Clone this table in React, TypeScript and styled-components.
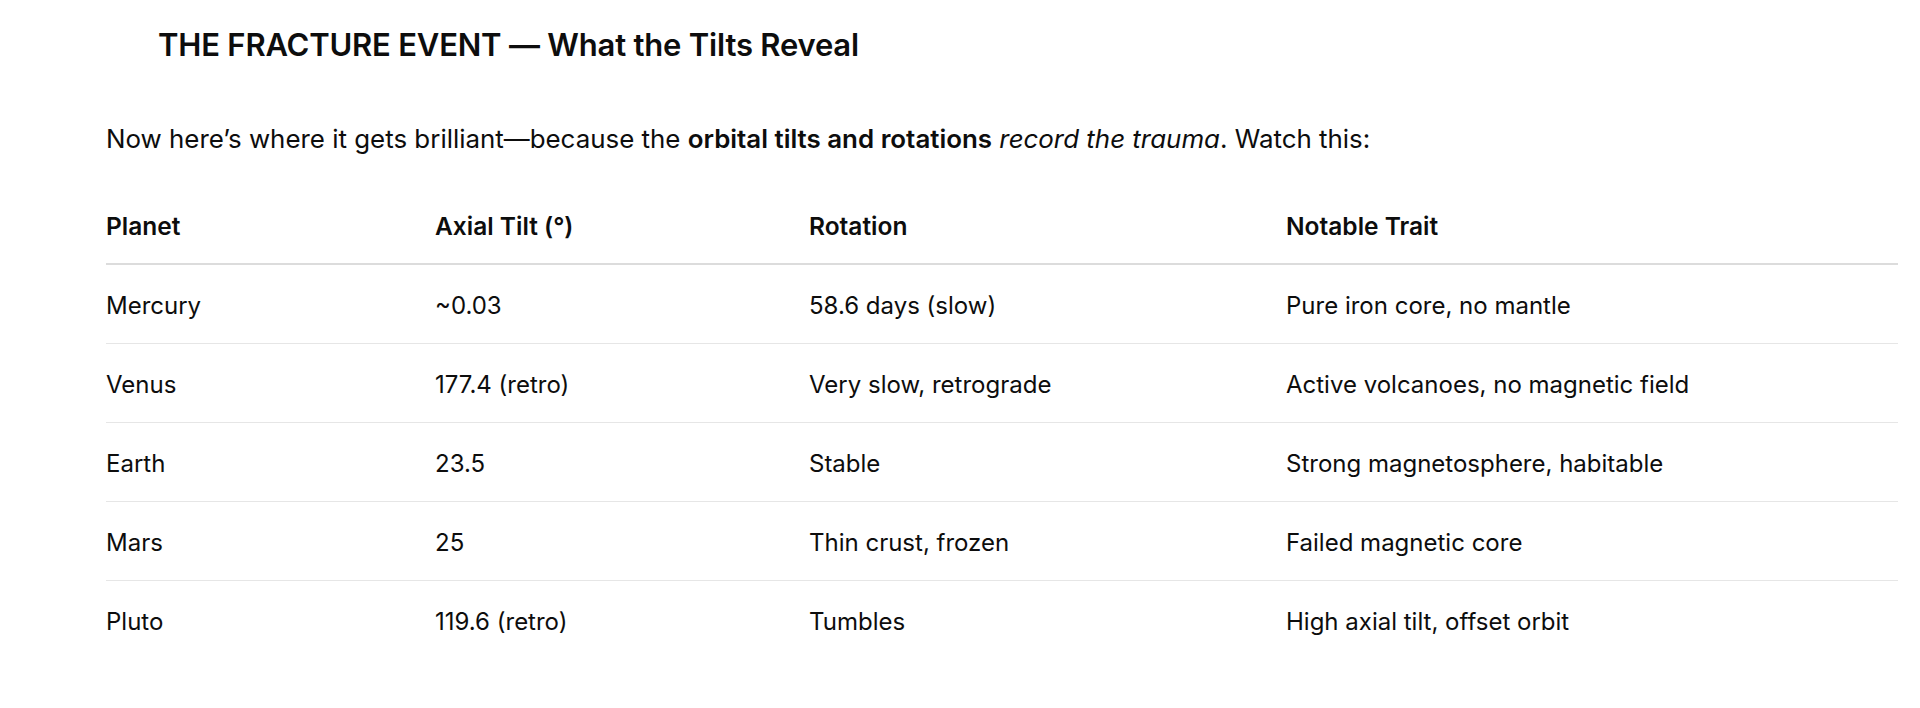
import React from 'react';
import styled, { createGlobalStyle } from 'styled-components';

const GlobalStyle = createGlobalStyle`
  html, body {
    margin: 0;
    padding: 0;
    background: #ffffff;
  }
  body {
    font-family: Inter, "Noto Sans", "Liberation Sans", sans-serif;
    color: #0d0d0d;
    -webkit-font-smoothing: antialiased;
  }
`;

const Page = styled.div`
  padding: 24px 22px 0 106px;
`;

const Heading = styled.h3`
  margin: 0 0 0 52px;
  font-size: 31px;
  line-height: 42px;
  font-weight: 600;
  letter-spacing: -0.2px;
`;

const Intro = styled.p`
  margin: 56px 0 0 0;
  font-size: 25.9px;
  line-height: 34px;
  font-weight: 400;

  strong {
    font-weight: 600;
  }
`;

const Table = styled.table`
  margin-top: 55px;
  width: 100%;
  border-collapse: collapse;
  font-size: 24px;
`;

const HeadCell = styled.th<{ $w: number }>`
  width: ${(p) => p.$w}px;
  text-align: left;
  font-weight: 600;
  font-size: 24.5px;
  padding: 0 0 22px 0;
  line-height: 30px;
  border-bottom: 2px solid #dcdcdc;
`;

const Row = styled.tr`
  & + & td {
    border-top: 1px solid #e6e6e6;
  }
`;

const Cell = styled.td`
  padding: 26px 0 22px 0;
  line-height: 30px;
  vertical-align: middle;
`;

const columns = [
  { title: 'Planet', w: 329 },
  { title: 'Axial Tilt (°)', w: 374 },
  { title: 'Rotation', w: 477 },
  { title: 'Notable Trait', w: 612 },
];

const rows = [
  ['Mercury', '~0.03', '58.6 days (slow)', 'Pure iron core, no mantle'],
  ['Venus', '177.4 (retro)', 'Very slow, retrograde', 'Active volcanoes, no magnetic field'],
  ['Earth', '23.5', 'Stable', 'Strong magnetosphere, habitable'],
  ['Mars', '25', 'Thin crust, frozen', 'Failed magnetic core'],
  ['Pluto', '119.6 (retro)', 'Tumbles', 'High axial tilt, offset orbit'],
];

export default function App() {
  return (
    <>
      <GlobalStyle />
      <Page>
        <Heading>THE FRACTURE EVENT — What the Tilts Reveal</Heading>
        <Intro>
          Now here’s where it gets brilliant—because the <strong>orbital tilts and rotations</strong>{' '}
          <em>record the trauma</em>. Watch this:
        </Intro>
        <Table>
          <thead>
            <tr>
              {columns.map((c) => (
                <HeadCell key={c.title} $w={c.w}>{c.title}</HeadCell>
              ))}
            </tr>
          </thead>
          <tbody>
            {rows.map((r) => (
              <Row key={r[0]}>
                {r.map((v, i) => (
                  <Cell key={i}>{v}</Cell>
                ))}
              </Row>
            ))}
          </tbody>
        </Table>
      </Page>
    </>
  );
}
